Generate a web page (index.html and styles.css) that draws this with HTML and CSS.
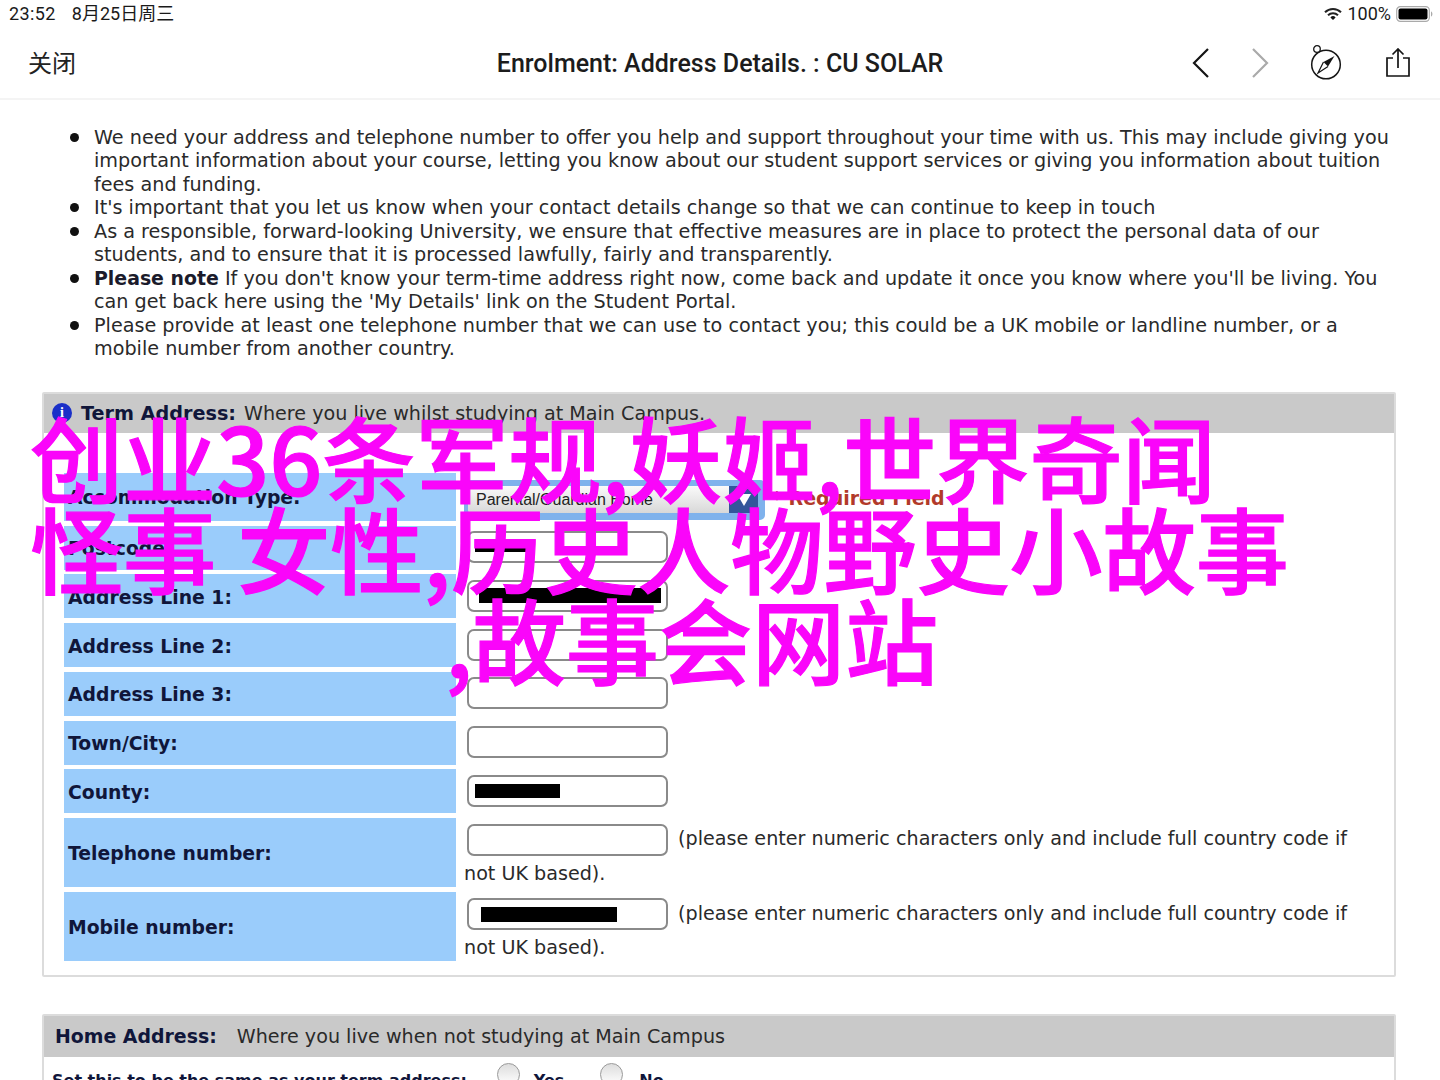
FILE: index.html
```html
<!DOCTYPE html>
<html lang="zh-CN">
<head>
<meta charset="utf-8">
<title>Enrolment: Address Details. : CU SOLAR</title>
<link rel="stylesheet" href="styles.css">
</head>
<body>
<div class="page">
  <div class="status">
    <div class="status-left"><span class="clock">23:52</span><span>8月25日周三</span></div>
    <div class="status-right">
      <svg class="wifi" width="18" height="14" viewBox="0 0 18 14"><path d="M1 5.2a11.4 11.4 0 0 1 16 0" fill="none" stroke="#222" stroke-width="2"/><path d="M4 8.2a7.2 7.2 0 0 1 10 0" fill="none" stroke="#222" stroke-width="2"/><path d="M9 13l-2.6-2.6a3.7 3.7 0 0 1 5.2 0z" fill="#111"/></svg>
      <span>100%</span>
      <svg width="37" height="16" viewBox="0 0 37 16"><rect x="0.7" y="0.7" width="32.6" height="14.6" rx="3.6" fill="none" stroke="#aaa" stroke-width="1.2"/><rect x="2.5" y="2.5" width="29" height="11" rx="2" fill="#000"/><path d="M35 5.5c1 .3 1.4 1.3 1.4 2.5s-.4 2.2-1.4 2.5z" fill="#aaa"/></svg>
    </div>
  </div>
  <header class="nav">
    <div class="nav-close">关闭</div>
    <div class="nav-title">Enrolment: Address Details. : CU SOLAR</div>
    <div class="nav-icons">
      <svg width="18" height="30" viewBox="0 0 18 30"><path d="M16 1 2 15l14 14" fill="none" stroke="#151515" stroke-width="2.200"/></svg>
      <svg class="ic-forward" width="18" height="30" viewBox="0 0 18 30"><path d="M2 1l14 14L2 29" fill="none" stroke="#aaa" stroke-width="2.200"/></svg>
      <svg class="ic-compass" width="32" height="36" viewBox="0 0 32 36"><circle cx="16" cy="20.500" r="14.300" fill="none" stroke="#151515" stroke-width="1.500"/><circle cx="7" cy="5" r="3.300" fill="#fff" stroke="#151515" stroke-width="1.300"/><path d="M24.500 12 13.500 18 18 22.500z" fill="#151515"/><path d="M18 22.500 8 29 13.500 18" fill="none" stroke="#151515" stroke-width="1.200"/></svg>
      <svg class="ic-share" width="26" height="30" viewBox="0 0 26 30"><path d="M8 10H2v18h22V10h-6M13 20V1.500M7.500 6.500 13 1l5.500 5.500" fill="none" stroke="#151515" stroke-width="1.700"/></svg>
    </div>
  </header>
  <main class="content">
    <ul class="notes">
      <li>We need your address and telephone number to offer you help and support throughout your time with us. This may include giving you important information about your course, letting you know about our student support services or giving you information about tuition fees and funding.</li>
      <li>It's important that you let us know when your contact details change so that we can continue to keep in touch</li>
      <li>As a responsible, forward-looking University, we ensure that effective measures are in place to protect the personal data of our students, and to ensure that it is processed lawfully, fairly and transparently.</li>
      <li><strong>Please note</strong> If you don't know your term-time address right now, come back and update it once you know where you'll be living. You can get back here using the 'My Details' link on the Student Portal.</li>
      <li>Please provide at least one telephone number that we can use to contact you; this could be a UK mobile or landline number, or a mobile number from another country.</li>
    </ul>

    <section class="panel panel-term">
      <div class="panel-head term-head">
        <span class="info">i</span>
        <strong>Term Address:</strong><span>Where you live whilst studying at Main Campus.</span>
      </div>
      <div class="rows">
        <div class="row row-accom">
          <div class="label">Accommodation Type:</div>
          <div class="value value-select">
            <div class="select-glow"><div class="select"><span class="select-text">Parental/Guardian Home</span><span class="select-btn"><i></i></span></div></div>
            <span class="required">* Required Field</span>
          </div>
        </div>
        <div class="row"><div class="label">Postcode:</div><div class="value"><span class="field"><i class="bar bar-post"></i></span></div></div>
        <div class="row"><div class="label">Address Line 1:</div><div class="value"><span class="field"><i class="bar bar-addr"></i></span></div></div>
        <div class="row"><div class="label">Address Line 2:</div><div class="value"><span class="field"></span></div></div>
        <div class="row"><div class="label">Address Line 3:</div><div class="value"><span class="field"></span></div></div>
        <div class="row"><div class="label">Town/City:</div><div class="value"><span class="field"></span></div></div>
        <div class="row"><div class="label">County:</div><div class="value"><span class="field"><i class="bar bar-county"></i></span></div></div>
        <div class="row row-tall"><div class="label">Telephone number:</div><div class="value"><span class="field"></span> (please enter numeric characters only and include full country code if not UK based).</div></div>
        <div class="row row-tall"><div class="label">Mobile number:</div><div class="value"><span class="field"><i class="bar bar-mobile"></i></span> (please enter numeric characters only and include full country code if not UK based).</div></div>
      </div>
    </section>

    <section class="panel panel-home">
      <div class="panel-head home-head"><strong>Home Address:</strong><span>Where you live when not studying at Main Campus</span></div>
      <div class="same">
        <strong class="same-label">Set this to be the same as your term address:</strong>
        <span class="radio"></span><strong class="opt-yes">Yes</strong>
        <span class="radio radio-no"></span><strong>No</strong>
      </div>
    </section>
  </main>

  <div class="overlay">
    <span class="ov-line">创业36条军规,妖姬,世界奇闻</span>
    <span class="ov-line">怪事 女性,历史人物野史小故事</span>
    <span class="ov-line ov-last">,故事会网站</span>
  </div>
</div>
</body>
</html>
```
FILE: styles.css
```css
html, body { margin: 0; padding: 0; background: #fff; overflow: hidden; }
.page { position: relative; width: 1440px; height: 1080px; overflow: hidden; background: #fff; font-family: "DejaVu Sans", sans-serif; color: #222; }

.status { height: 28px; display: flex; justify-content: space-between; align-items: center; padding: 0 7px 0 9px; font-family: "Roboto", "Noto Sans CJK SC", sans-serif; font-size: 18px; line-height: 22px; color: #1a1a1a; }
.status-left { display: flex; align-items: baseline; gap: 16px; }
.clock { letter-spacing: 0.4px; }
.status-right { display: flex; align-items: center; gap: 5px; }
.wifi { margin-right: 0; }

.nav { height: 70px; display: flex; align-items: center; justify-content: space-between; position: relative; border-bottom: 2px solid #f4f4f4; padding: 0 29px 0 28px; }
.nav-close { font-family: "Noto Sans CJK SC", sans-serif; font-size: 24px; color: #222; margin-top: -4px; }
.nav-title { position: absolute; left: 0; right: 0; text-align: center; font-family: "Roboto", sans-serif; font-weight: 500; font-size: 25px; color: #1c1c1c; }
.nav-icons { display: flex; align-items: center; }
.ic-forward { margin-left: 41px; }
.ic-compass { margin-left: 41px; margin-top: -2px; }
.ic-share { margin-left: 43px; }

.content { padding: 26px 44px 0 42px; }
.notes { list-style: none; margin: 0 0 31px; padding: 0 0 0 52px; font-size: 19.2px; line-height: 23.45px; color: #2a2a2a; }
.notes li { position: relative; }
.notes li::before { content: ""; position: absolute; left: -24px; top: 7px; width: 9px; height: 9px; border-radius: 50%; background: #111; }
.notes strong { color: #1b1b2b; font-size: 18.9px; }

.panel { border: 2px solid #dcdcdc; border-radius: 2px; padding: 0 0 14px 20px; margin-bottom: 37px; }
.panel-head { height: 39px; margin-left: -20px; background: #c9c9c9; display: flex; align-items: center; font-size: 19.15px; color: #2a2a2a; white-space: pre; }
.panel-head strong { color: #10163a; font-size: 18.9px; }
.term-head { padding-left: 8px; margin-bottom: 40px; gap: 8px; }
.term-head strong { font-size: 19.2px; }
.info { width: 20px; height: 20px; border-radius: 50%; background: #1a2fc8; color: #fff; font: bold 14px/20px "Liberation Serif", serif; text-align: center; margin-right: 1px; }
.home-head { padding-left: 11px; gap: 20px; height: 41px; }

.rows { display: flex; flex-direction: column; gap: 4.75px; }
.row { display: flex; min-height: 44px; }
.row-accom { height: 48.25px; }
.row-tall { height: 69px; }
.row-tall + .row-tall .value { padding-top: 5px; }
.label { width: 388px; padding: 2px 0 0 4px; flex: none; background: #9accfb; display: flex; align-items: center; font-size: 18.8px; font-weight: bold; color: #10163a; }
.value { flex: 1; padding: 4px 40px 0 8px; font-size: 19.15px; line-height: 34.5px; color: #2a2a2a; }

.field { display: inline-flex; align-items: center; vertical-align: middle; width: 201px; height: 32px; box-sizing: border-box; margin: 0 4px 0 3px; border: 2px solid #8a8a8a; border-radius: 7px; background: #fff; }
.bar { display: block; background: #000; }
.bar-post { width: 52px; height: 7px; margin: 2px 0 0 6px; }
.bar-addr { width: 182px; height: 15px; margin: 0 0 0 10px; }
.bar-county { width: 85px; height: 14px; margin: 0 0 0 6px; }
.bar-mobile { width: 136px; height: 15px; margin: 0 0 0 12px; }

.value-select { display: flex; align-items: center; padding: 0; margin-left: 8px; }
.select-glow { width: 301px; height: 40px; margin-top: 7px; box-sizing: border-box; padding: 6px 7px 7px 4px; background: #7fb2ec; border-radius: 5px; }
.select { height: 27px; display: flex; background: linear-gradient(#fafafa, #d8d8d8); border-radius: 3px; overflow: hidden; }
.select-text { flex: 1; font: 16px/27px "Liberation Sans", sans-serif; color: #222; padding-left: 8px; }
.select-btn { width: 29px; background: #33569b; display: flex; align-items: center; justify-content: center; }
.select-btn i { width: 0; height: 0; border-left: 7px solid transparent; border-right: 7px solid transparent; border-top: 12px solid #fff; }
.required { margin: 4px 0 0 7px; color: #b23a2a; font-weight: bold; font-size: 19px; }

.panel-home { padding: 0 0 0 20px; }
.same { display: flex; align-items: center; height: 48px; margin-left: -12px; font-size: 16px; color: #10163a; }
.same-label { margin-right: 30px; }
.radio { width: 23px; height: 23px; box-sizing: border-box; border: 1px solid #999; border-radius: 50%; background: linear-gradient(#ddd, #fff); margin: -12px 14px 0 0; }
.radio-no { margin-right: 16px; }
.opt-yes { margin-right: 36px; }

.overlay { position: absolute; left: 30px; top: 410px; font-family: "Noto Sans CJK SC", sans-serif; font-weight: 500; font-size: 93.1px; line-height: 91px; color: #fa05fa; -webkit-text-stroke: 1.2px #fa05fa; }
.ov-line { display: block; white-space: nowrap; }
.ov-last { padding-left: 415px; }
```
